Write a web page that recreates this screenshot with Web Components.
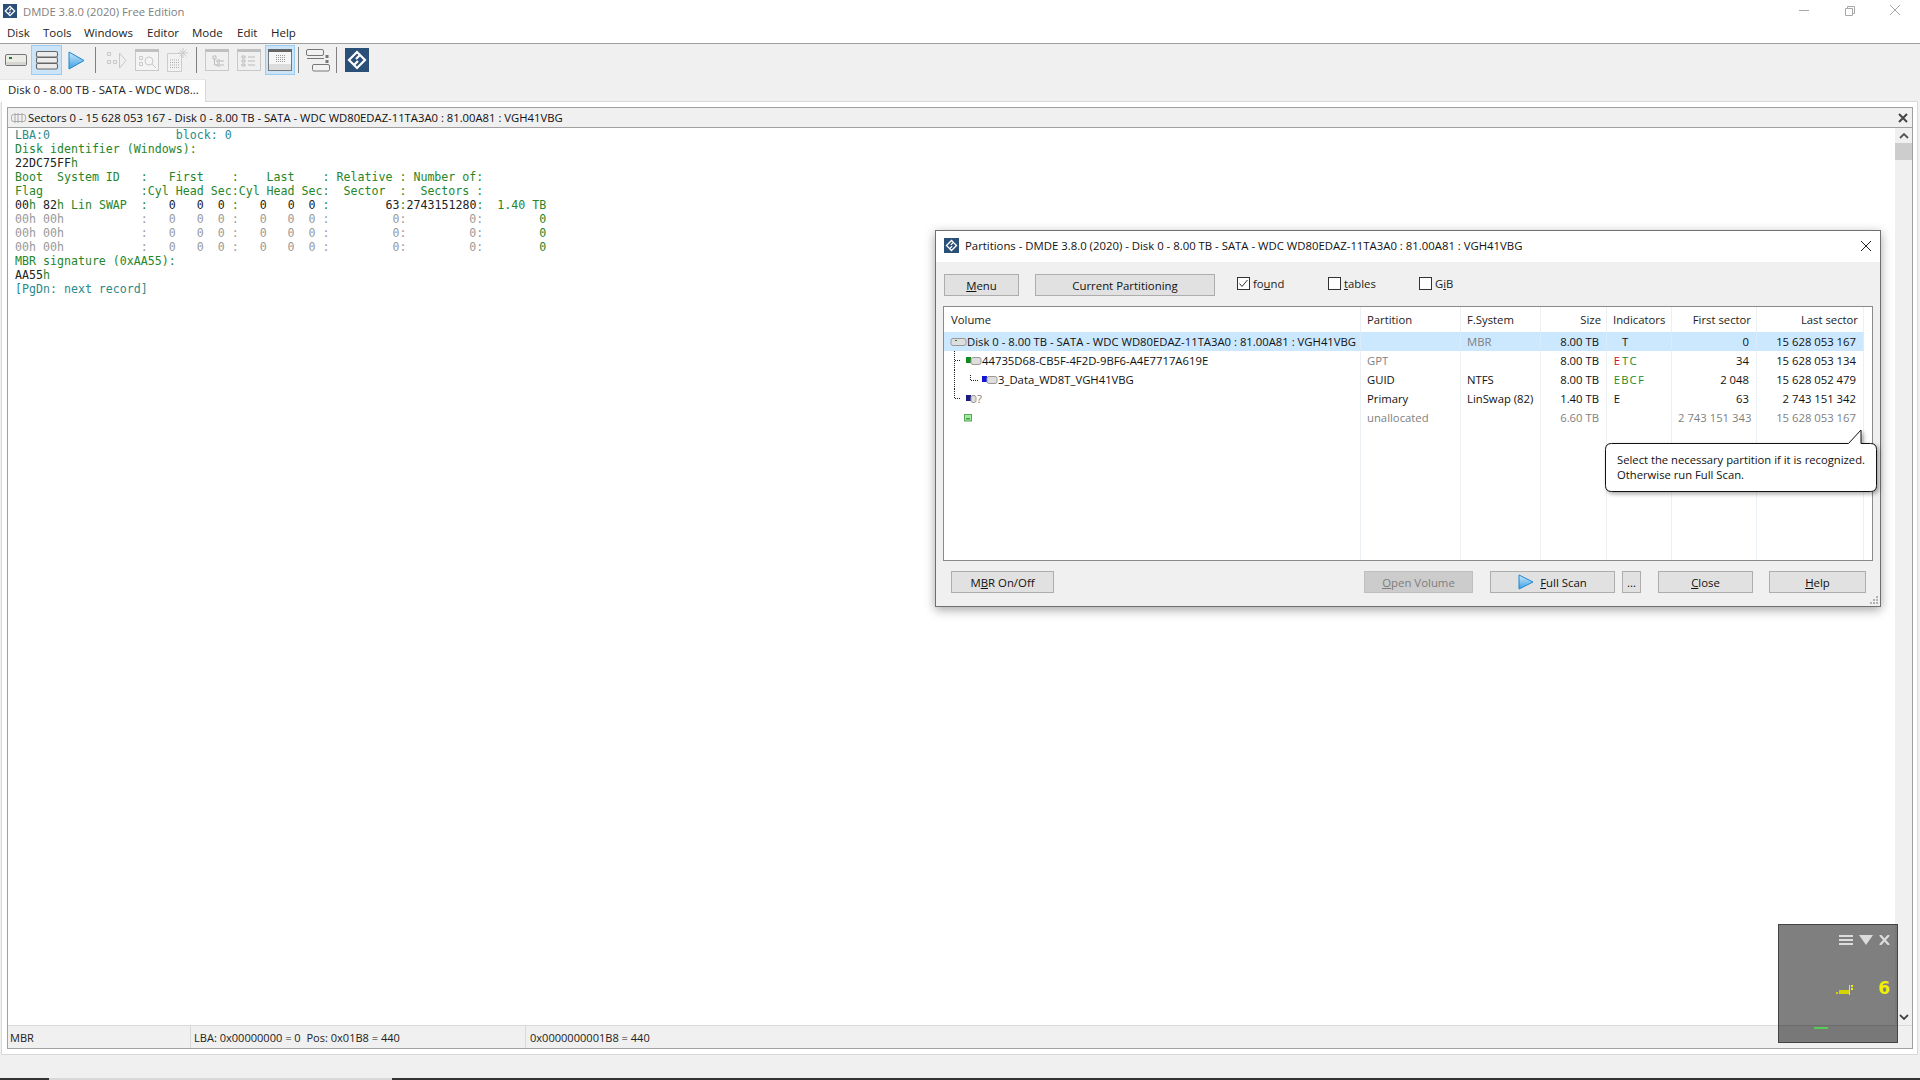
<!DOCTYPE html>
<html>
<head>
<meta charset="utf-8">
<title>DMDE</title>
<style>
  html, body { margin: 0; height: 100%; overflow: hidden; background: #f0f0f0; }
  body { font: 11.3px "Open Sans", "Liberation Sans", sans-serif; color: #1a1a1a; }
</style>
</head>
<body>
<dmde-app></dmde-app>

<script>
const FONT = '"Open Sans", "Liberation Sans", sans-serif';

class DmdeLogo extends HTMLElement {
  constructor() {
    super();
    const size = this.getAttribute('size') || 14;
    this.attachShadow({mode: 'open'}).innerHTML = `
      <style>:host { display: inline-flex; flex: none; } svg { display: block; }</style>
      <svg width="${size}" height="${size}" viewBox="0 0 24 24">
        <rect width="24" height="24" fill="#2b5078"/>
        <g fill="none" stroke="#fff" stroke-width="2.2">
          <path d="M14.500 6.500L12 4L4 12L9 17L13 13"/>
          <path d="M9.500 17.500L12 20L20 12L15 7L11 11"/>
        </g>
      </svg>`;
  }
}

class TitleBar extends HTMLElement {
  constructor() {
    super();
    this.attachShadow({mode: 'open'}).innerHTML = `
      <style>
        :host { display: flex; align-items: center; height: 22px; background: #fff; padding: 0 2px 0 3px; color: #808080; font-size: 11.25px; }
        span { margin-left: 6px; flex: 1; }
        i { width: 45.5px; display: flex; justify-content: center; }
        svg { display: block; }
      </style>
      <dmde-logo></dmde-logo>
      <span>DMDE 3.8.0 (2020) Free Edition</span>
      <i><svg width="12" height="12" stroke="#a8a8a8" fill="none"><path d="M1 5.500h10"/></svg></i>
      <i><svg width="12" height="12" stroke="#a8a8a8" fill="none"><path d="M1.500 3.500h7v7h-7zM3.500 3.500v-2h7v7h-2"/></svg></i>
      <i><svg width="12" height="12" stroke="#a8a8a8" fill="none"><path d="M1 0l10 10M11 0L1 10"/></svg></i>`;
  }
}

class MenuBar extends HTMLElement {
  constructor() {
    super();
    const items = [['Disk', 7], ['Tools', 43], ['Windows', 84], ['Editor', 147], ['Mode', 192], ['Edit', 237], ['Help', 271]];
    const html = items.map(([name, x], i) => {
      const next = items[i + 1] ? items[i + 1][1] : x + 40;
      return `<span style="width:${next - x}px">${name}</span>`;
    }).join('');
    this.attachShadow({mode: 'open'}).innerHTML = `
      <style>
        :host { display: flex; align-items: center; height: 22px; box-sizing: border-box; background: #fff; padding-left: 7px; border-bottom: 1px solid #a0a0a0; font-size: 11.5px; color: #222; }
        span { display: block; flex: none; }
      </style>${html}`;
  }
}

class ToolBar extends HTMLElement {
  constructor() {
    super();
    const drive = `<svg width="22" height="12"><rect x=".5" y=".5" width="21" height="11" rx="1.5" fill="#ecece6" stroke="#777"/><rect x="4" y="3" width="3" height="2" fill="#1c7a2c"/><rect x="1" y="8" width="20" height="3" fill="#d6d6d0"/></svg>`;
    const lines = `<svg width="24" height="24" fill="#ececec" stroke="#666" stroke-width="1.100"><rect x="1.500" y="3.500" width="21" height="5.500" rx="1.500"/><rect x="1.500" y="9.500" width="21" height="5.500" rx="1.500"/><rect x="1.500" y="15.500" width="21" height="5.500" rx="1.500"/></svg>`;
    const play = `<svg width="17" height="19"><defs><linearGradient id="p" x1="0" y1="0" x2="0" y2="1"><stop offset="0" stop-color="#cde8fb"/><stop offset="1" stop-color="#3da0e4"/></linearGradient></defs><path d="M1 1L16 9.500L1 18z" fill="url(#p)" stroke="#1d86d0"/></svg>`;
    const scan = `<svg width="21" height="19" fill="none" stroke="#c8c8c8"><path d="M1.500 1.500h3v3h-3zM1.500 9.500h3v3h-3zM7.500 9.500h3v3h-3zM13.500 2L20 9.500L13.500 17z"/></svg>`;
    const search = `<svg width="24" height="22" fill="#f4f4f4" stroke="#c8c8c8"><rect x=".5" y=".5" width="23" height="21"/><rect width="24" height="3" fill="#c0c0c0" stroke="none"/><path d="M4.500 7.500h3v3h-3zM4.500 13.500h3v3h-3z" fill="none"/><circle cx="14" cy="12" r="4" fill="none"/><path d="M17 15l4 4"/></svg>`;
    const fresh = `<svg width="22" height="24" fill="#f2f2f2" stroke="#cccccc"><path d="M1.500 5.500h14v18h-14z"/><path d="M4 12h9M4 14.500h9M4 17h9M4 19.500h9" stroke-dasharray="1 1" stroke="#aaa"/><path d="M17 0v10M12 5h10M13.500 1.500l7 7M20.500 1.500l-7 7"/></svg>`;
    const panel = (body, on) => `<svg width="24" height="22"><rect x=".5" y=".5" width="23" height="21" fill="${on ? '#f6f6f6' : '#f0f0f0'}" stroke="${on ? '#777' : '#c8c8c8'}"/><rect width="24" height="3" fill="${on ? '#666' : '#c0c0c0'}"/>${body}</svg>`;
    const tree = panel(`<path d="M8 7h3v3H8zM12 11h3v2h-3zM12 15h3v2h-3zM9.500 10v6h2.500M16 12h3M16 16h3" fill="none" stroke="#bbb"/>`);
    const list = panel(`<path d="M5 7h3v2H5zM5 11h3v2H5zM5 15h3v2H5zM11 8h7M11 12h7M11 16h7" fill="none" stroke="#bbb"/>`);
    const grid = panel(`<rect x="1" y="15" width="22" height="6" fill="#ddd"/><path d="M8 6.500h9M8 8.500h9M8 10.500h9M8 12.500h9" stroke="#999" stroke-dasharray="1 1"/>`, true);
    const parts = `<svg width="24" height="23" fill="#f2f2f2" stroke="#777"><rect x=".5" y=".5" width="17" height="6" rx="1.500"/><rect x="6.500" y="15.500" width="17" height="6.500" rx="1.500"/><path d="M1 9.500h17"/><path d="M19.500 6h3v3h-3zM19.500 11h3v3h-3z" fill="#777" stroke="none"/></svg>`;
    const spec = [[31, drive], [31, lines, 1], [28, play], 10, [32, scan], [30, search], [30, fresh], 8, [33, tree], [32, list], [30, grid, 1], 6, [34, parts], 3];
    const html = spec.map((s) => {
      if (typeof s === 'number') return `<u style="width:${s}px"></u>`;
      return `<b class="${s[2] ? 'on' : ''}" style="width:${s[0]}px">${s[1]}</b>`;
    }).join('');
    this.attachShadow({mode: 'open'}).innerHTML = `
      <style>
        :host { display: flex; align-items: center; height: 35px; padding-bottom: 3px; box-sizing: border-box; background: #f0f0f0; }
        b { display: flex; align-items: center; justify-content: center; height: 30px; box-sizing: border-box; flex: none; }
        b.on { background: #cce4f7; border: 1px solid #99ccee; }
        u { display: flex; justify-content: center; height: 26px; flex: none; text-decoration: none; }
        u::after { content: ""; width: 1px; background: #7f7f7f; }
        svg { display: block; }
        dmde-logo { margin: 0 7px; }
      </style>${html}<dmde-logo size="24"></dmde-logo>`;
  }
}

class TabStrip extends HTMLElement {
  constructor() {
    super();
    this.attachShadow({mode: 'open'}).innerHTML = `
      <style>
        :host { display: block; height: 22px; position: relative; z-index: 1; }
        div { width: 206px; height: 23px; box-sizing: border-box; padding: 2px 0 0 8px; background: #fff; border-right: 1px solid #d9d9d9; border-top: 1px solid #e6e6e6; font-size: 11.45px; color: #222; white-space: nowrap; }
      </style>
      <div><slot></slot></div>`;
  }
}

class SectorView extends HTMLElement {
  constructor() {
    super();
    this.attachShadow({mode: 'open'}).innerHTML = `
      <style>
        :host { display: block; flex: none; padding-left: 7px; font: 11.62px/14px "DejaVu Sans Mono", "Liberation Mono", monospace; color: #25862a; }
        pre { margin: 0; padding: 0; font: inherit; }
        .k { color: #222; } .m { color: #9a9a9a; } .t { color: #2c8a8a; }
      </style>
      <pre><span class="t">LBA:0                  block: 0</span>
Disk identifier (Windows):
<span class="k">22DC75FF</span>h
Boot  System ID   :   First    :    Last    : Relative : Number of:
Flag              :Cyl Head Sec:Cyl Head Sec:  Sector  :  Sectors :
<span class="k">00</span>h <span class="k">82</span>h Lin SWAP  :   <span class="k">0   0  0</span> :   <span class="k">0   0  0</span> :        <span class="k">63</span>:<span class="k">2743151280</span>:  1.40 TB
<span class="m">00h 00h           :   0   0  0 :   0   0  0 :         0:         0:</span>        0
<span class="m">00h 00h           :   0   0  0 :   0   0  0 :         0:         0:</span>        0
<span class="m">00h 00h           :   0   0  0 :   0   0  0 :         0:         0:</span>        0
MBR signature (0xAA55):
<span class="k">AA55</span>h
<span class="t">[PgDn: next record]</span></pre>`;
  }
}

class SectorPanel extends HTMLElement {
  constructor() {
    super();
    this.attachShadow({mode: 'open'}).innerHTML = `
      <style>
        :host { display: flex; flex-direction: column; height: 100%; box-sizing: border-box; border: 1px solid #a0a0a0; background: #fff; }
        header { display: flex; align-items: center; height: 19px; background: #f0f0f0; border-bottom: 1px solid #a0a0a0; padding: 0 4px 0 3px; font-size: 11.27px; color: #111; flex: none; }
        header svg.d { margin-right: 2px; }
        header span { flex: 1; white-space: nowrap; }
        main { flex: 1; display: flex; min-height: 0; background: #fff; }
        .text { flex: 1; }
        .bar { width: 17px; background: #f0f0f0; display: flex; flex-direction: column; align-items: center; }
        .bar svg { margin: 5px 0; flex: none; }
        .thumb { width: 100%; height: 17px; background: #cdcdcd; flex: none; margin-top: -1px; }
        .fill { flex: 1; }
        footer { display: grid; grid-template-columns: 182px 335px 1fr; height: 23px; background: #f0f0f0; border-top: 1px solid #d9d9d9; flex: none; font-size: 11.05px; color: #222; align-items: center; box-sizing: border-box; }
        footer span { padding-left: 2px; height: 100%; display: flex; align-items: center; box-sizing: border-box; white-space: nowrap; }
        footer span + span { border-left: 1px solid #d9d9d9; padding-left: 3px; }
        footer span + span + span { padding-left: 4px; }
      </style>
      <header>
        <svg class="d" width="15" height="12" fill="none" stroke="#aaa"><rect x=".5" y="2.500" width="14" height="7" rx="2"/><path d="M4 1v10M7 1v10M11 1v10"/></svg>
        <span><slot name="title"></slot></span>
        <svg width="10" height="10" stroke="#444" stroke-width="2"><path d="M1 1l8 8M9 1l-8 8"/></svg>
      </header>
      <main>
        <div class="text"><slot></slot></div>
        <div class="bar">
          <svg width="10" height="6" fill="none" stroke="#555" stroke-width="1.800"><path d="M1 5l4-4 4 4"/></svg>
          <div class="thumb"></div>
          <div class="fill"></div>
          <svg width="10" height="6" fill="none" stroke="#444" stroke-width="1.800"><path d="M1 1l4 4 4-4"/></svg>
        </div>
      </main>
      <footer>
        <span><slot name="s1"></slot></span>
        <span><slot name="s2"></slot></span>
        <span><slot name="s3"></slot></span>
      </footer>`;
  }
}

class WinButton extends HTMLElement {
  constructor() {
    super();
    this.attachShadow({mode: 'open'}).innerHTML = `
      <style>
        :host { display: flex; align-items: center; justify-content: center; gap: 6px; flex: none; height: 22px; box-sizing: border-box; background: #e1e1e1; border: 1px solid #adadad; font-size: 11.4px; color: #111; white-space: nowrap; }
        :host([disabled]) { background: #cccccc; border-color: #bfbfbf; color: #7d7d7d; }
      </style>
      <slot></slot>`;
  }
}

class WinCheck extends HTMLElement {
  constructor() {
    super();
    const on = this.hasAttribute('checked');
    this.attachShadow({mode: 'open'}).innerHTML = `
      <style>
        :host { display: flex; align-items: center; gap: 3px; flex: none; width: 91px; font-size: 11.3px; color: #222; height: 14px; margin-bottom: 3px; }
        svg { display: block; flex: none; }
      </style>
      <svg width="13" height="13"><rect x=".5" y=".5" width="12" height="12" fill="#fff" stroke="#333"/>${on ? '<path d="M2.500 6.500L5 9.500L10.500 3" fill="none" stroke="#333"/>' : ''}</svg>
      <span><slot></slot></span>`;
  }
}

class PartRow extends HTMLElement {
  constructor() {
    super();
    this.attachShadow({mode: 'open'}).innerHTML = `
      <style>
        :host { display: grid; grid-template-columns: 417px 100px 80px 66px 65px 85px 107px; height: 19px; width: 920px; line-height: 19px; white-space: nowrap; font-size: 11.3px; color: #111; }
        :host([selected]) { background: #cce8ff; }
        :host([head]) { height: 25px; line-height: 25px; color: #222; }
        :host([filler]) { height: auto; flex: 1; }
        ::slotted(*) { border-right: 1px solid #eaf0f4; box-sizing: border-box; padding: 0 7px 0 6px; overflow: hidden; }
        :host([head]) ::slotted(*) { padding: 0 5px 0 6px; }
        :host([head]) ::slotted(:first-child) { padding-left: 7px; }
        :host([selected]) ::slotted(*) { border-right-color: #d8ecfb; }
        ::slotted(.r) { text-align: right; }
        ::slotted(.d) { color: #7f7f7f; }
        ::slotted(.vol) { padding: 0 0 0 5px; display: flex; align-items: center; overflow: visible; }
      </style>
      <slot></slot>`;
  }
}

class PartList extends HTMLElement {
  constructor() {
    super();
    const drive = (x, c, w = 10) => `${c ? `<rect x="${x}" y="6" width="5" height="6" fill="${c}"/>` : ''}<rect x="${x + (c ? 5 : 0)}" y="6.500" width="${c ? w : 15}" height="7" rx="2" fill="#dedede" stroke="#999"/>`;
    const dots = 'fill="none" stroke="#222" stroke-dasharray="1 1"';
    const icons = [
      `<svg width="18" height="19">${drive(2)}<rect x="6" y="8" width="2" height="1" fill="#1c7a2c"/></svg>`,
      `<svg width="33" height="19"><path d="M5.500 0V19M6 9.500h6" ${dots}/>${drive(17, '#0f8a1d')}</svg>`,
      `<svg width="49" height="19"><path d="M5.500 0V19" ${dots}/><path d="M21.500 5V10M22 10.500h7" ${dots}/>${drive(33, '#1414d6')}</svg>`,
      `<svg width="28" height="19"><path d="M5.500 0V9M6 9.500h6" ${dots}/>${drive(17, '#1a1a80', 5)}</svg>`,
      `<svg width="31" height="19"><rect x="15.500" y="6.500" width="7" height="6.500" fill="#a4e8a4" stroke="#5aa85a"/><rect x="17" y="10" width="4" height="1.500" fill="#3aa83a"/></svg>`
    ];
    const ind = (s) => `<span style="display:inline-flex">${s.map(([t, c]) => `<i style="display:inline-block;width:8px;font-style:normal;text-align:center;color:${c || '#111'}">${t}</i>`).join('')}</span>`;
    const g = '#1c8a2a';
    const rows = [
      ['Disk 0 - 8.00 TB - SATA - WDC WD80EDAZ-11TA3A0 : 81.00A81 : VGH41VBG', '', 'MBR', '8.00 TB', ind([['\u00a0'], ['T']]), '0', '15 628 053 167', 0],
      ['44735D68-CB5F-4F2D-9BF6-A4E7717A619E', 'GPT', '', '8.00 TB', ind([['E', '#d01030'], ['T', g], ['C', g]]), '34', '15 628 053 134', 0],
      ['3_Data_WD8T_VGH41VBG', 'GUID', 'NTFS', '8.00 TB', ind([['E', g], ['B', g], ['C', g], ['F', g]]), '2 048', '15 628 052 479', 0],
      ['', 'Primary', 'LinSwap (82)', '1.40 TB', ind([['E']]), '63', '2 743 151 342', 0],
      ['', 'unallocated', '', '6.60 TB', '', '2 743 151 343', '15 628 053 167', 1]
    ];
    const body = rows.map((r, i) => `
      <part-row ${i === 0 ? 'selected' : ''}>
        <div class="vol">${icons[i]}<span>${r[0]}</span>${i === 3 ? '<span style="color:#777">?</span>' : ''}</div>
        <div class="${r[7] || i === 1 ? 'd' : ''}">${r[1]}</div>
        <div class="${i === 0 ? 'd' : ''}">${r[2]}</div>
        <div class="r ${r[7] ? 'd' : ''}">${r[3]}</div>
        <div>${r[4]}</div>
        <div class="r ${r[7] ? 'd' : ''}">${r[5]}</div>
        <div class="r ${r[7] ? 'd' : ''}">${r[6]}</div>
      </part-row>`).join('');
    this.attachShadow({mode: 'open'}).innerHTML = `
      <style>
        :host { display: flex; flex-direction: column; height: 255px; box-sizing: border-box; margin: 0 7px; border: 1px solid #8a8a8a; background: #fff; flex: none; }
      </style>
      <part-row head>
        <div>Volume</div><div>Partition</div><div>F.System</div><div class="r">Size</div><div>Indicators</div><div class="r">First sector</div><div class="r">Last sector</div>
      </part-row>
      ${body}
      <part-row filler><div></div><div></div><div></div><div></div><div></div><div></div><div></div></part-row>`;
  }
}

class HintCallout extends HTMLElement {
  constructor() {
    super();
    this.attachShadow({mode: 'open'}).innerHTML = `
      <style>
        :host { position: absolute; left: 669px; top: 198px; width: 274px; height: 64px; display: block; font-size: 11.25px; line-height: 15px; color: #111; }
        svg { position: absolute; inset: 0; filter: drop-shadow(2px 2px 2px rgba(0,0,0,.35)); }
        div { position: absolute; left: 12px; top: 23px; white-space: nowrap; }
      </style>
      <svg width="274" height="64" fill="#fff" stroke="#111"><path d="M6.500 14.500H243.500L256 1V14.500H265.500Q271.500 14.500 271.500 20.500V56.500Q271.500 62.500 265.500 62.500H6.500Q.5 62.500 .5 56.500V20.500Q.5 14.500 6.500 14.500Z"/></svg>
      <div><slot></slot></div>`;
  }
}

class PartitionsDialog extends HTMLElement {
  constructor() {
    super();
    this.attachShadow({mode: 'open'}).innerHTML = `
      <style>
        :host { position: absolute; left: 935px; top: 230px; width: 946px; height: 377px; box-sizing: border-box; border: 1px solid #707070; background: #f0f0f0; display: flex; flex-direction: column; box-shadow: 0 3px 10px rgba(0,0,0,.35); }
        .cap { display: flex; align-items: center; height: 29px; padding: 0 0 2px 8px; background: #fff; font-size: 11.35px; color: #111; flex: none; white-space: nowrap; }
        .cap span { flex: 1; margin-left: 6px; }
        .cap svg { margin-right: 8px; }
        .top { display: flex; align-items: center; height: 22px; margin: 12px 0 10px 8px; flex: none; }
        .bottom { display: flex; align-items: center; height: 22px; margin-top: 10px; padding-left: 15px; flex: none; position: relative; }
        .grip { position: absolute; right: 1px; bottom: 1px; }
      </style>
      <div class="cap">
        <dmde-logo size="15"></dmde-logo>
        <span>Partitions - DMDE 3.8.0 (2020) - Disk 0 - 8.00 TB - SATA - WDC WD80EDAZ-11TA3A0 : 81.00A81 : VGH41VBG</span>
        <svg width="12" height="12" stroke="#222" fill="none"><path d="M1 1l10 10M11 1L1 11"/></svg>
      </div>
      <div class="top">
        <win-button style="width:75px"><span><u>M</u>enu</span></win-button>
        <win-button style="width:180px;margin-left:16px"><span>Current Partitioning</span></win-button>
        <win-check checked style="margin-left:22px">fo<u>u</u>nd</win-check>
        <win-check><u>t</u>ables</win-check>
        <win-check>G<u>i</u>B</win-check>
      </div>
      <part-list></part-list>
      <div class="bottom">
        <win-button style="width:103px"><span>M<u>B</u>R On/Off</span></win-button>
        <win-button disabled style="width:109px;margin-left:310px"><span><u>O</u>pen Volume</span></win-button>
        <win-button style="width:125px;margin-left:17px">
          <svg width="16" height="16"><defs><linearGradient id="f" x1="0" y1="0" x2="0" y2="1"><stop offset="0" stop-color="#cde8fb"/><stop offset="1" stop-color="#3da0e4"/></linearGradient></defs><path d="M1 1L15 8L1 15z" fill="url(#f)" stroke="#1d86d0"/></svg>
          <span><u>F</u>ull Scan</span>
        </win-button>
        <win-button style="width:19px;margin-left:7px"><span>...</span></win-button>
        <win-button style="width:95px;margin-left:17px"><span><u>C</u>lose</span></win-button>
        <win-button style="width:97px;margin-left:16px"><span><u>H</u>elp</span></win-button>
      </div>
      <svg class="grip" width="9" height="9" fill="#b4b4b4"><path d="M6 0h2v2H6zM3 3h2v2H3zM6 3h2v2H6zM0 6h2v2H0zM3 6h2v2H3zM6 6h2v2H6z"/></svg>
      <hint-callout>Select the necessary partition if it is recognized.<br>Otherwise run Full Scan.</hint-callout>`;
  }
}

class ProgressHud extends HTMLElement {
  constructor() {
    super();
    this.attachShadow({mode: 'open'}).innerHTML = `
      <style>
        :host { position: absolute; left: 1778px; top: 924px; width: 120px; height: 119px; box-sizing: border-box; border: 1px solid #444; background: rgba(0,0,0,.5); display: flex; flex-direction: column; }
        .icons { display: flex; justify-content: flex-end; align-items: center; gap: 6px; padding: 10px 7px 0 0; }
        .val { display: flex; justify-content: flex-end; align-items: center; margin-top: 35px; padding-right: 7px; color: #f0f000; font: bold 17px/16px "DejaVu Sans", sans-serif; }
        .val svg { margin-right: 24px; }
        .dash { width: 14px; height: 2px; background: #55cc55; margin: 31px 0 0 35px; }
        svg { display: block; }
      </style>
      <div class="icons">
        <svg width="14" height="10" fill="#dcdcdc"><path d="M0 0h14v2H0zM0 4h14v2H0zM0 8h14v2H0z"/></svg>
        <svg width="14" height="10" fill="#dcdcdc"><path d="M0 0h14L7 10z"/></svg>
        <svg width="11" height="10" stroke="#dcdcdc" stroke-width="2.200"><path d="M1 0l9 10M10 0L1 10"/></svg>
      </div>
      <div class="val">
        <svg width="18" height="14" fill="#d4d400"><path d="M0 11h2v2H0zM3 9h10v4H3z"/><path d="M13 4h1v10h-1zM15 4h2v2h-2zM15 7h2v2h-2z" fill="#f0f000"/></svg>
        <span>6</span>
      </div>
      <div class="dash"></div>`;
  }
}

class DmdeApp extends HTMLElement {
  constructor() {
    super();
    this.attachShadow({mode: 'open'}).innerHTML = `
      <style>
        :host { display: flex; flex-direction: column; position: relative; width: 1920px; height: 1080px; overflow: hidden; font-family: ${FONT}; background: #f0f0f0; }
        .page { flex: 1; min-height: 0; margin: 0 2px 0 1px; padding: 5px 4px 5px 5px; background: #fff; border: 1px solid #d9d9d9; }
        .gap { height: 23px; flex: none; }
        .task { height: 2px; flex: none; display: flex; background: #333; }
        .task i { margin-left: 49px; width: 343px; background: #d8d8d8; }
      </style>
      <title-bar></title-bar>
      <menu-bar></menu-bar>
      <tool-bar></tool-bar>
      <tab-strip>Disk 0 - 8.00 TB - SATA - WDC WD8...</tab-strip>
      <div class="page">
        <sector-panel>
          <span slot="title">Sectors 0 - 15 628 053 167 - Disk 0 - 8.00 TB - SATA - WDC WD80EDAZ-11TA3A0 : 81.00A81 : VGH41VBG</span>
          <sector-view></sector-view>
          <span slot="s1">MBR</span>
          <span slot="s2">LBA: 0x00000000 = 0&nbsp; Pos: 0x01B8 = 440</span>
          <span slot="s3">0x0000000001B8 = 440</span>
        </sector-panel>
      </div>
      <div class="gap"></div>
      <div class="task"><i></i></div>
      <partitions-dialog></partitions-dialog>
      <progress-hud></progress-hud>`;
  }
}

customElements.define('dmde-logo', DmdeLogo);
customElements.define('title-bar', TitleBar);
customElements.define('menu-bar', MenuBar);
customElements.define('tool-bar', ToolBar);
customElements.define('tab-strip', TabStrip);
customElements.define('sector-view', SectorView);
customElements.define('sector-panel', SectorPanel);
customElements.define('win-button', WinButton);
customElements.define('win-check', WinCheck);
customElements.define('part-row', PartRow);
customElements.define('part-list', PartList);
customElements.define('hint-callout', HintCallout);
customElements.define('partitions-dialog', PartitionsDialog);
customElements.define('progress-hud', ProgressHud);
customElements.define('dmde-app', DmdeApp);
</script>
</body>
</html>
